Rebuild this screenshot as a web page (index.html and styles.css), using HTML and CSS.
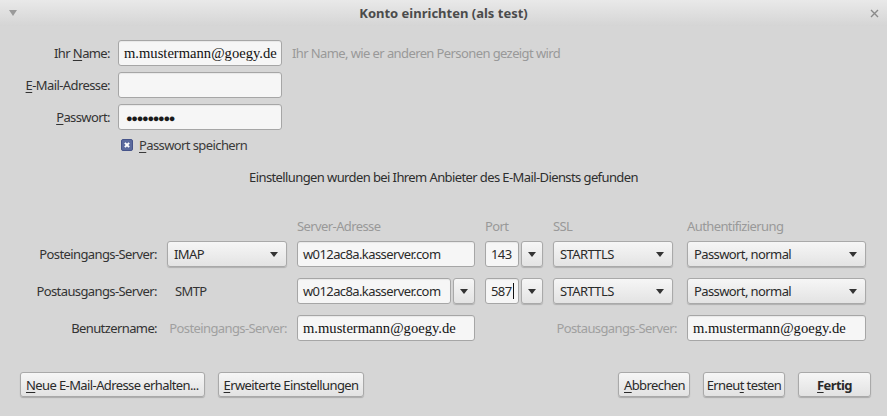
FILE: index.html
```html
<!DOCTYPE html>
<html lang="de">
<head>
  <meta charset="UTF-8" />
  <title>Konto einrichten</title>
  <link rel="stylesheet" href="styles.css">
</head>
<body>
  <div class="titlebar">
    <span class="tb-menu"></span>
    <span class="tb-title">Konto einrichten (als test)</span>
    <svg class="tb-close" width="9" height="9" viewBox="0 0 9 9"><path d="M1 1 L8 8 M8 1 L1 8" stroke="#8a8a8a" stroke-width="1.4"/></svg>
  </div>

  <div class="identity">
    <label class="lbl">Ihr <u>N</u>ame:</label>
    <div class="field serif">m.mustermann@goegy.de</div>
    <span class="hint">Ihr Name, wie er anderen Personen gezeigt wird</span>

    <label class="lbl"><u>E</u>-Mail-Adresse:</label>
    <div class="field"></div>
    <span></span>

    <label class="lbl"><u>P</u>asswort:</label>
    <div class="field dots">●●●●●●●●●</div>
    <span></span>

    <span></span>
    <div class="check-row">
      <span class="checkbox"></span>
      <span><u>P</u>asswort speichern</span>
    </div>
  </div>

  <p class="message">Einstellungen wurden bei Ihrem Anbieter des E-Mail-Diensts gefunden</p>

  <div class="servers">
    <span></span>
    <span></span>
    <span class="col-head">Server-Adresse</span>
    <span class="col-head">Port</span>
    <span class="col-head">SSL</span>
    <span class="col-head">Authentifizierung</span>

    <label class="lbl">Posteingangs-Server:</label>
    <div class="select">IMAP<i class="arrow"></i></div>
    <div class="field">w012ac8a.kasserver.com</div>
    <div class="combo">
      <div class="field">143</div>
      <div class="drop"><i class="arrow"></i></div>
    </div>
    <div class="select w120">STARTTLS<i class="arrow"></i></div>
    <div class="select">Passwort, normal<i class="arrow"></i></div>

    <label class="lbl">Postausgangs-Server:</label>
    <span class="plain">SMTP</span>
    <div class="combo">
      <div class="field">w012ac8a.kasserver.com</div>
      <div class="drop"><i class="arrow"></i></div>
    </div>
    <div class="combo">
      <div class="field">587<span class="caret"></span></div>
      <div class="drop"><i class="arrow"></i></div>
    </div>
    <div class="select w120">STARTTLS<i class="arrow"></i></div>
    <div class="select">Passwort, normal<i class="arrow"></i></div>

    <label class="lbl">Benutzername:</label>
    <span class="sub-lbl">Posteingangs-Server:</span>
    <div class="field serif">m.mustermann@goegy.de</div>
    <span class="sub-lbl span2">Postausgangs-Server:</span>
    <div class="field serif">m.mustermann@goegy.de</div>
  </div>

  <div class="buttons">
    <button class="btn"><u>N</u>eue E-Mail-Adresse erhalten...</button>
    <button class="btn"><u>E</u>rweiterte Einstellungen</button>
    <span class="spacer"></span>
    <button class="btn cancel"><u>A</u>bbrechen</button>
    <button class="btn retry">Erneu<u>t</u> testen</button>
    <button class="btn default"><u>F</u>ertig</button>
  </div>
</body>
</html>
```

FILE: styles.css
```css
body {
  margin: 0;
  width: 887px;
  height: 416px;
  overflow: hidden;
  background-color: #d6d6d6;
  font-family: "Noto Sans", sans-serif;
  font-size: 13px;
  letter-spacing: -0.6px;
  color: #3a3a3a;
}

u {
  text-decoration: underline;
  text-underline-offset: 2px;
}

.titlebar {
  height: 26px;
  display: flex;
  align-items: center;
  justify-content: space-between;
  padding: 0 8px 0 9px;
  background: linear-gradient(#e9e9e9, #d5d5d5);
}

.tb-menu {
  width: 0;
  height: 0;
  border-left: 4px solid transparent;
  border-right: 4px solid transparent;
  border-top: 6px solid #9a9a9a;
}

.tb-title {
  font-weight: bold;
  color: #4b4b4b;
  letter-spacing: 0;
}

.identity {
  display: grid;
  grid-template-columns: 110px 164px 1fr;
  column-gap: 8px;
  row-gap: 6px;
  margin-top: 14px;
  align-items: center;
}

.lbl {
  text-align: right;
  color: #333;
  white-space: nowrap;
}

.hint {
  margin-left: 2px;
  color: #999;
}

.field {
  box-sizing: border-box;
  height: 26px;
  display: flex;
  align-items: center;
  padding: 0 5px;
  background-color: #f6f6f6;
  border: 1px solid #a6a6a6;
  border-radius: 3px;
  box-shadow: inset 0 1px 1px rgba(0, 0, 0, 0.06);
  color: #2a2a2a;
  white-space: nowrap;
  overflow: hidden;
}

.serif {
  font-family: "Liberation Serif", serif;
  font-size: 14.6px;
  letter-spacing: 0;
  color: #111;
}

.dots {
  font-size: 11px;
  letter-spacing: -1.3px;
  padding-left: 7px;
  color: #1a1a1a;
}

.check-row {
  display: flex;
  align-items: center;
  gap: 6px;
  height: 18px;
  padding-left: 3px;
}

.checkbox {
  width: 12px;
  height: 12px;
  box-sizing: border-box;
  border-radius: 2px;
  background-color: #5b6a9e;
  border: 1px solid #46548a;
  position: relative;
}

.checkbox::before,
.checkbox::after {
  content: "";
  position: absolute;
  left: 2px;
  top: 4px;
  width: 6px;
  height: 2px;
  background-color: #fff;
  transform: rotate(45deg);
}

.checkbox::after {
  transform: rotate(-45deg);
}

.message {
  margin: 14px 0 0;
  text-align: center;
  line-height: 18px;
  color: #2e2e2e;
}

.servers {
  display: grid;
  grid-template-columns: 137px 120px 178px 58px 124px 179px;
  column-gap: 10px;
  row-gap: 11px;
  padding-left: 20px;
  margin-top: 31px;
  align-items: center;
}

.servers > :nth-child(-n+6) {
  margin-bottom: -5px;
}

.col-head {
  color: #999;
  line-height: 18px;
}

.plain {
  padding-left: 8px;
  color: #333;
}

.sub-lbl {
  text-align: right;
  color: #a0a0a0;
  white-space: nowrap;
}

.span2 {
  grid-column: 4 / 6;
}

.select {
  box-sizing: border-box;
  height: 26px;
  display: flex;
  align-items: center;
  justify-content: space-between;
  padding: 0 8px 0 6px;
  background: linear-gradient(#f6f6f6, #e3e3e3);
  border: 1px solid #a9a9a9;
  border-radius: 3px;
  box-shadow: 0 1px 1px rgba(0, 0, 0, 0.18);
  color: #2a2a2a;
}

.w120 {
  width: 120px;
}

.arrow {
  width: 0;
  height: 0;
  border-left: 4px solid transparent;
  border-right: 4px solid transparent;
  border-top: 5px solid #333;
}

.combo {
  display: flex;
  gap: 2px;
}

.combo .field {
  flex: 1;
}

.drop {
  box-sizing: border-box;
  width: 22px;
  height: 26px;
  display: flex;
  align-items: center;
  justify-content: center;
  background: linear-gradient(#f6f6f6, #e3e3e3);
  border: 1px solid #a9a9a9;
  border-radius: 3px;
  box-shadow: 0 1px 1px rgba(0, 0, 0, 0.18);
}

.caret {
  width: 1px;
  height: 16px;
  margin-left: 1px;
  background-color: #111;
}

.buttons {
  display: flex;
  gap: 13px;
  padding: 0 16px 0 20px;
  margin-top: 31px;
}

.spacer {
  flex: 1;
}

.btn {
  height: 25px;
  padding: 0 5px;
  font-family: inherit;
  font-size: 13px;
  letter-spacing: -0.6px;
  color: #2a2a2a;
  background: linear-gradient(#f6f6f6, #e2e2e2);
  border: 1px solid #a9a9a9;
  border-radius: 3px;
  box-shadow: 0 1px 1px rgba(0, 0, 0, 0.2);
}

.btn.cancel {
  width: 72px;
}

.btn.retry {
  width: 82px;
  padding: 0 2px;
}

.btn.default {
  width: 73px;
  font-weight: bold;
}
```
